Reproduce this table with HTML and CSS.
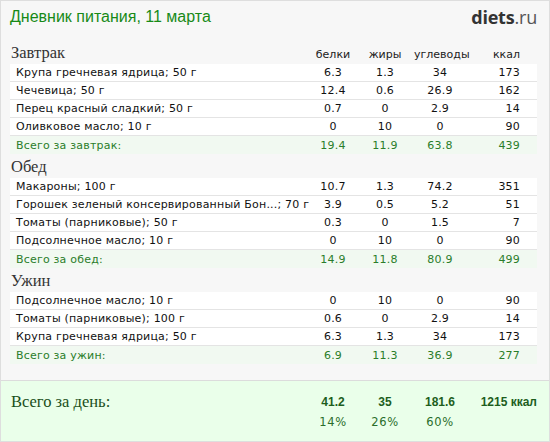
FILE: index.html
```html
<!DOCTYPE html>
<html lang="ru">
<head>
<meta charset="utf-8">
<title>Дневник питания</title>
<link rel="stylesheet" href="styles.css">
</head>
<body>
<div class="frame">
  <div class="content">
    <div class="top">
      <h1 class="title">Дневник питания, 11 марта</h1>
      <div class="logo"><b>diets</b>.ru</div>
    </div>

    <div class="section">
      <div class="grid head">
        <div class="meal">Завтрак</div>
        <div class="c">белки</div><div class="c">жиры</div><div class="c">углеводы</div><div class="r">ккал</div>
      </div>
      <div class="grid row"><div class="name">Крупа гречневая ядрица; 50 г</div><div class="c">6.3</div><div class="c">1.3</div><div class="c">34</div><div class="r">173</div></div>
      <div class="grid row"><div class="name">Чечевица; 50 г</div><div class="c">12.4</div><div class="c">0.6</div><div class="c">26.9</div><div class="r">162</div></div>
      <div class="grid row"><div class="name">Перец красный сладкий; 50 г</div><div class="c">0.7</div><div class="c">0</div><div class="c">2.9</div><div class="r">14</div></div>
      <div class="grid row"><div class="name">Оливковое масло; 10 г</div><div class="c">0</div><div class="c">10</div><div class="c">0</div><div class="r">90</div></div>
      <div class="grid row total"><div class="name">Всего за завтрак:</div><div class="c">19.4</div><div class="c">11.9</div><div class="c">63.8</div><div class="r">439</div></div>
    </div>

    <div class="section">
      <div class="grid head">
        <div class="meal">Обед</div>
      </div>
      <div class="grid row"><div class="name">Макароны; 100 г</div><div class="c">10.7</div><div class="c">1.3</div><div class="c">74.2</div><div class="r">351</div></div>
      <div class="grid row"><div class="name">Горошек зеленый консервированный Бон...; 70 г</div><div class="c">3.9</div><div class="c">0.5</div><div class="c">5.2</div><div class="r">51</div></div>
      <div class="grid row"><div class="name">Томаты (парниковые); 50 г</div><div class="c">0.3</div><div class="c">0</div><div class="c">1.5</div><div class="r">7</div></div>
      <div class="grid row"><div class="name">Подсолнечное масло; 10 г</div><div class="c">0</div><div class="c">10</div><div class="c">0</div><div class="r">90</div></div>
      <div class="grid row total"><div class="name">Всего за обед:</div><div class="c">14.9</div><div class="c">11.8</div><div class="c">80.9</div><div class="r">499</div></div>
    </div>

    <div class="section">
      <div class="grid head">
        <div class="meal">Ужин</div>
      </div>
      <div class="grid row"><div class="name">Подсолнечное масло; 10 г</div><div class="c">0</div><div class="c">10</div><div class="c">0</div><div class="r">90</div></div>
      <div class="grid row"><div class="name">Томаты (парниковые); 100 г</div><div class="c">0.6</div><div class="c">0</div><div class="c">2.9</div><div class="r">14</div></div>
      <div class="grid row"><div class="name">Крупа гречневая ядрица; 50 г</div><div class="c">6.3</div><div class="c">1.3</div><div class="c">34</div><div class="r">173</div></div>
      <div class="grid row total"><div class="name">Всего за ужин:</div><div class="c">6.9</div><div class="c">11.3</div><div class="c">36.9</div><div class="r">277</div></div>
    </div>
  </div>

  <div class="summary">
    <div class="grid sum-main">
      <div class="day">Всего за день:</div>
      <div class="c">41.2</div><div class="c">35</div><div class="c">181.6</div><div class="r">1215 ккал</div>
    </div>
    <div class="grid sum-pct">
      <div></div>
      <div class="c">14%</div><div class="c">26%</div><div class="c">60%</div><div></div>
    </div>
  </div>
</div>
</body>
</html>
```

FILE: styles.css
```css
* { box-sizing: border-box; }
html, body { margin: 0; padding: 0; }
body {
  width: 550px;
  height: 442px;
  background: #f7f7f7;
  font-family: "DejaVu Sans", Verdana, sans-serif;
  font-size: 11px;
  color: #111;
}
.frame {
  width: 550px;
  height: 442px;
  border: 1px solid #dedede;
  display: flex;
  flex-direction: column;
  background: #f7f7f7;
}
.content {
  padding: 0 12px 0 9px;
  flex: 1;
}
.top {
  height: 39px;
  display: flex;
  justify-content: space-between;
  align-items: flex-start;
}
.title {
  margin: 0;
  padding: 6px 0 0 0;
  font-family: "Liberation Sans", Arial, sans-serif;
  font-weight: normal;
  font-size: 16px;
  line-height: 20px;
  color: #178a17;
}
.logo {
  padding-top: 6px;
  font-family: "Open Sans", "DejaVu Sans", sans-serif;
  font-size: 18px;
  line-height: 20px;
  color: #555;
  letter-spacing: -0.2px;
}
.logo b { color: #333; font-weight: 700; }

.grid {
  display: grid;
  grid-template-columns: 1fr 46px 58px 52px 71px;
  align-items: center;
}
.c { text-align: center; }
.r { text-align: right; padding-right: 17px; }

.head {
  height: 24px;
  align-items: end;
  padding-bottom: 2px;
  color: #222;
}
.meal {
  padding-left: 1px;
  font-family: "Liberation Serif", "Times New Roman", serif;
  font-size: 16.5px;
  line-height: 18px;
  color: #333;
}
.head .c, .head .r { line-height: 14px; }

.row {
  height: 18px;
  background: #fff;
  border-bottom: 1px solid #e4e4e4;
  letter-spacing: 0.2px;
}
.name {
  padding-left: 6px;
  white-space: nowrap;
  overflow: hidden;
}
.row.total {
  background: #f1f9f1;
  border-bottom: none;
  color: #2a7d2a;
}

.summary {
  height: 61px;
  border-top: 1px solid #dcdcdc;
  background: #eaffea;
  padding: 11px 12px 0 9px;
  color: #1d5e1d;
}
.sum-main {
  height: 18px;
  font-family: "Liberation Sans", Arial, sans-serif;
  font-weight: bold;
  font-size: 12px;
}
.sum-main .r { padding-right: 0; white-space: nowrap; }
.day {
  padding-left: 1px;
  font-family: "Liberation Serif", "Times New Roman", serif;
  font-weight: normal;
  font-size: 16.5px;
  color: #1a4f1a;
}
.sum-pct {
  margin-top: 4px;
  height: 16px;
  font-size: 11.5px;
  letter-spacing: 0.6px;
  color: #2a6e2a;
}
```
